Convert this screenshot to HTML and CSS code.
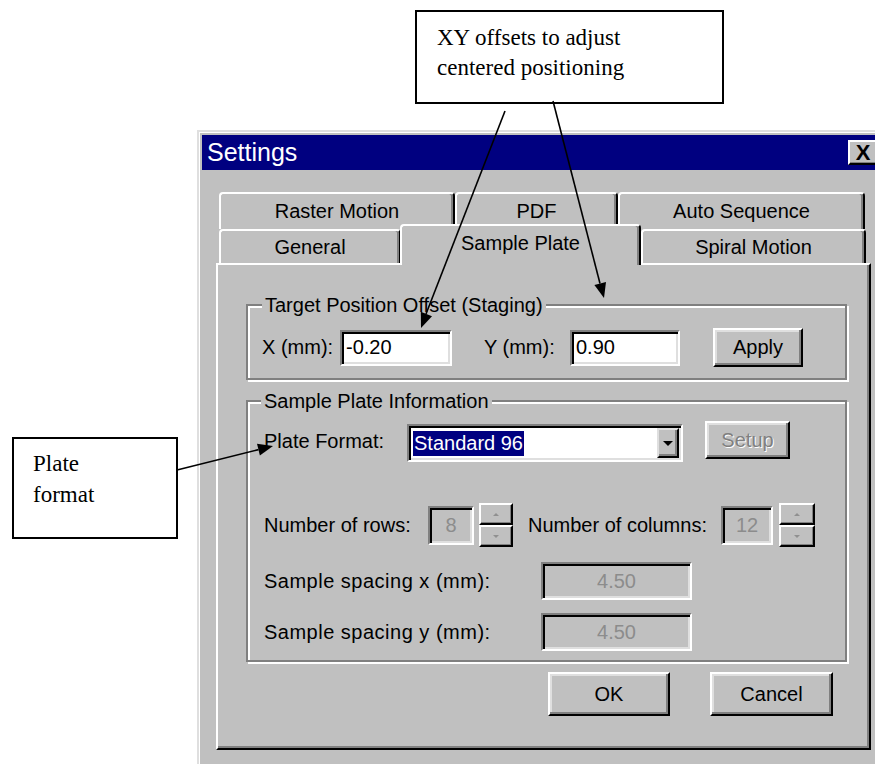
FILE: index.html
```html
<!DOCTYPE html>
<html lang="en">
<head>
    <meta charset="UTF-8">
    <title>Settings - Sample Plate</title>
    <link rel="stylesheet" href="styles.css">
</head>
<body>
<div class="page">
    <div class="dialog">
        <div class="titlebar">
            <span class="title">Settings</span>
            <span class="close">X</span>
        </div>
        <div class="tabs">
            <div class="tab-row back">
                <div class="tab w-raster">Raster Motion</div>
                <div class="tab w-pdf">PDF</div>
                <div class="tab w-auto">Auto Sequence</div>
            </div>
            <div class="tab-row front">
                <div class="tab w-general">General</div>
                <div class="tab active w-sample">Sample Plate</div>
                <div class="tab w-spiral">Spiral Motion</div>
            </div>
            <div class="panel">
                <div class="group g-offset">
                    <div class="group-title">Target Position Offset (Staging)</div>
                    <div class="row r-offset">
                        <span class="lbl w-xlbl">X (mm):</span>
                        <div class="edit w-xedit">-0.20</div>
                        <span class="lbl w-ylbl">Y (mm):</span>
                        <div class="edit w-yedit">0.90</div>
                        <div class="btn w-apply">Apply</div>
                    </div>
                </div>
                <div class="group g-plate">
                    <div class="group-title">Sample Plate Information</div>
                    <div class="row r-format">
                        <span class="lbl w-format">Plate Format:</span>
                        <div class="combo">
                            <span class="sel">Standard 96</span>
                            <span class="drop"><span class="tri-down"></span></span>
                        </div>
                        <div class="btn disabled w-setup">Setup</div>
                    </div>
                    <div class="row r-spin">
                        <span class="lbl w-rows">Number of rows:</span>
                        <div class="edit disabled w-rowedit">8</div>
                        <div class="spin w-rowspin">
                            <span class="spin-btn"><span class="tri-up"></span></span>
                            <span class="spin-btn"><span class="tri-small"></span></span>
                        </div>
                        <span class="lbl w-cols">Number of columns:</span>
                        <div class="edit disabled w-coledit">12</div>
                        <div class="spin w-colspin">
                            <span class="spin-btn"><span class="tri-up"></span></span>
                            <span class="spin-btn"><span class="tri-small"></span></span>
                        </div>
                    </div>
                    <div class="row r-space-x">
                        <span class="lbl w-space">Sample spacing x (mm):</span>
                        <div class="edit disabled w-spaceedit">4.50</div>
                    </div>
                    <div class="row r-space-y">
                        <span class="lbl w-space">Sample spacing y (mm):</span>
                        <div class="edit disabled w-spaceedit">4.50</div>
                    </div>
                </div>
                <div class="actions">
                    <div class="btn w-ok">OK</div>
                    <div class="btn w-cancel">Cancel</div>
                </div>
            </div>
        </div>
    </div>

    <div class="callout callout-xy">XY offsets to adjust<br>centered positioning</div>
    <div class="callout callout-plate">Plate<br>format</div>

    <svg class="arrows" width="875" height="764" viewBox="0 0 875 764">
        <line x1="505" y1="111" x2="426" y2="314" />
        <polygon points="421,328 432,316.2 420.8,311.8" />
        <line x1="553" y1="101" x2="600" y2="283.5" />
        <polygon points="604,298 606,282 594.4,285" />
        <line x1="177" y1="470" x2="258.5" y2="449.6" />
        <polygon points="273,446 259.9,455.5 257,443.8" />
    </svg>
</div>
</body>
</html>
```

FILE: styles.css
```css
body { margin: 0; background-color: #fff; font-family: "Liberation Sans", Arial, sans-serif; font-size: 20px; color: #000; }
.page { position: relative; width: 875px; height: 764px; overflow: hidden; padding: 130px 0 0 197px; box-sizing: border-box; }

/* window frame */
.dialog { width: 690px; height: 660px; box-sizing: border-box; background-color: #c0c0c0; border: 2px solid; border-color: #dfdfdf #000 #000 #dfdfdf; box-shadow: inset 1px 1px #fff; padding: 3px; }
.titlebar { height: 35px; background-color: #000080; display: flex; align-items: center; justify-content: space-between; padding-left: 5px; }
.title { color: #fff; font-size: 25px; }
.close { width: 30px; height: 25px; box-sizing: border-box; margin-right: 4px; background-color: #c0c0c0; border: 2px solid; border-color: #fff #000 #000 #fff; box-shadow: inset -1px -1px #808080; display: flex; align-items: center; justify-content: center; font-size: 22px; font-weight: bold; line-height: 1; }

/* tabs */
.tabs { margin: 22px 0 0 14px; width: 655px; }
.tab-row { display: flex; padding-left: 3px; }
.tab-row.back { height: 37px; }
.tab-row.front { height: 34px; align-items: flex-end; }
.tab { box-sizing: border-box; height: 100%; display: flex; align-items: center; justify-content: center; background-color: #c0c0c0; border: 2px solid #fff; border-bottom: 0; border-right-color: #000; border-radius: 4px 4px 0 0; box-shadow: inset -2px 0 #808080; }
.tab.active { height: 41px; margin-bottom: -2px; margin-left: -1px; position: relative; z-index: 1; padding-bottom: 4px; }
.w-raster { width: 236px; }
.w-pdf { width: 163px; }
.w-auto { width: 247px; }
.w-general { width: 182px; }
.w-sample { width: 241px; }
.w-spiral { width: 225px; }

.panel { box-sizing: border-box; border: 2px solid; border-color: #fff #000 #000 #fff; box-shadow: inset -2px -2px #808080; padding: 39px 22px 32px 28px; }

/* group boxes */
.group { border: 2px solid #808080; box-shadow: inset 2px 2px #fff, 2px 2px #fff; }
.group-title { width: fit-content; height: 22px; line-height: 22px; margin: -12px 0 0 0; padding: 0 3px; background-color: #c0c0c0; }
.g-offset { padding: 0 14px 11px; }
.g-plate { margin-top: 20px; padding: 0 16px 9px; }
.g-plate .group-title { margin-left: -3px; }

.row { display: flex; align-items: center; }
.r-offset { margin-top: 12px; height: 39px; }
.r-format { margin-top: 9px; height: 41px; }
.r-spin { margin-top: 41px; height: 44px; }
.r-space-x { margin-top: 15px; height: 38px; }
.r-space-y { margin-top: 13px; height: 38px; }

.lbl { flex: none; white-space: nowrap; }
.w-xlbl { width: 78px; }
.w-ylbl { width: 86px; margin-left: 32px; }
.w-format { width: 143px; }
.w-rows { width: 164px; }
.w-cols { width: 193px; margin-left: 15px; }
.w-space { width: 277px; letter-spacing: 0.5px; }

/* controls */
.edit { box-sizing: border-box; height: 36px; flex: none; border: 2px solid; border-color: #808080 #fff #fff #808080; box-shadow: inset 2px 2px #000, inset -2px -2px #dfdfdf; background-color: #fff; padding: 0 4px; display: flex; align-items: center; }
.edit.disabled { background-color: #c0c0c0; color: #8c8c8c; justify-content: center; }
.w-xedit { width: 112px; }
.w-yedit { width: 110px; }
.w-rowedit { width: 46px; height: 39px; }
.w-coledit { width: 52px; height: 39px; }
.w-spaceedit { width: 151px; height: 38px; }

.btn { box-sizing: border-box; flex: none; display: flex; align-items: center; justify-content: center; background-color: #c0c0c0; border: 2px solid; border-color: #fff #000 #000 #fff; box-shadow: inset -2px -2px #808080, inset 2px 2px #dfdfdf; }
.btn.disabled { color: #808080; text-shadow: 1px 1px #fff; }
.w-apply { width: 90px; height: 39px; margin-left: 33px; }
.w-setup { width: 85px; height: 38px; margin-left: 22px; align-self: flex-start; }
.w-ok { width: 122px; height: 44px; }
.w-cancel { width: 123px; height: 44px; }

.combo { box-sizing: border-box; width: 276px; height: 38px; flex: none; align-self: flex-end; display: flex; align-items: center; padding: 2px; border: 2px solid; border-color: #808080 #fff #fff #808080; box-shadow: inset 2px 2px #000, inset -2px -2px #dfdfdf; background-color: #fff; }
.combo .sel { background-color: #000080; color: #fff; padding: 0 1px; line-height: 25px; margin-left: 2px; }
.combo .drop { margin-left: auto; width: 22px; height: 100%; box-sizing: border-box; display: flex; align-items: center; justify-content: center; background-color: #c0c0c0; border: 2px solid; border-color: #dfdfdf #000 #000 #dfdfdf; box-shadow: inset -2px -2px #808080; }
.tri-down { width: 0; height: 0; border-left: 5px solid transparent; border-right: 5px solid transparent; border-top: 5px solid #000; }

.spin { display: flex; flex-direction: column; height: 44px; flex: none; }
.w-rowspin { width: 34px; margin-left: 5px; }
.w-colspin { width: 36px; margin-left: 6px; }
.spin-btn { flex: 1; box-sizing: border-box; display: flex; align-items: center; justify-content: center; background-color: #c0c0c0; border: 2px solid; border-color: #fff #000 #000 #fff; box-shadow: inset -1px -1px #808080; }
.tri-up { width: 0; height: 0; border-left: 3px solid transparent; border-right: 3px solid transparent; border-bottom: 3px solid #909090; }
.tri-small { width: 0; height: 0; border-left: 3px solid transparent; border-right: 3px solid transparent; border-top: 3px solid #909090; }

.actions { display: flex; justify-content: flex-end; gap: 40px; margin-top: 10px; padding-right: 14px; }

/* annotation callouts */
.callout { position: absolute; z-index: 2; box-sizing: border-box; background-color: #fff; border: 2px solid #000; font-family: "Liberation Serif", "Times New Roman", serif; font-size: 23px; line-height: 30px; }
.callout-xy { left: 415px; top: 10px; width: 309px; height: 94px; padding: 11px 0 0 20px; }
.callout-plate { left: 12px; top: 437px; width: 166px; height: 102px; padding: 9px 0 0 19px; line-height: 31px; }
.arrows { position: absolute; left: 0; top: 0; z-index: 3; pointer-events: none; }
.arrows line { stroke: #000; stroke-width: 1.6; }
.arrows polygon { fill: #000; }
```
